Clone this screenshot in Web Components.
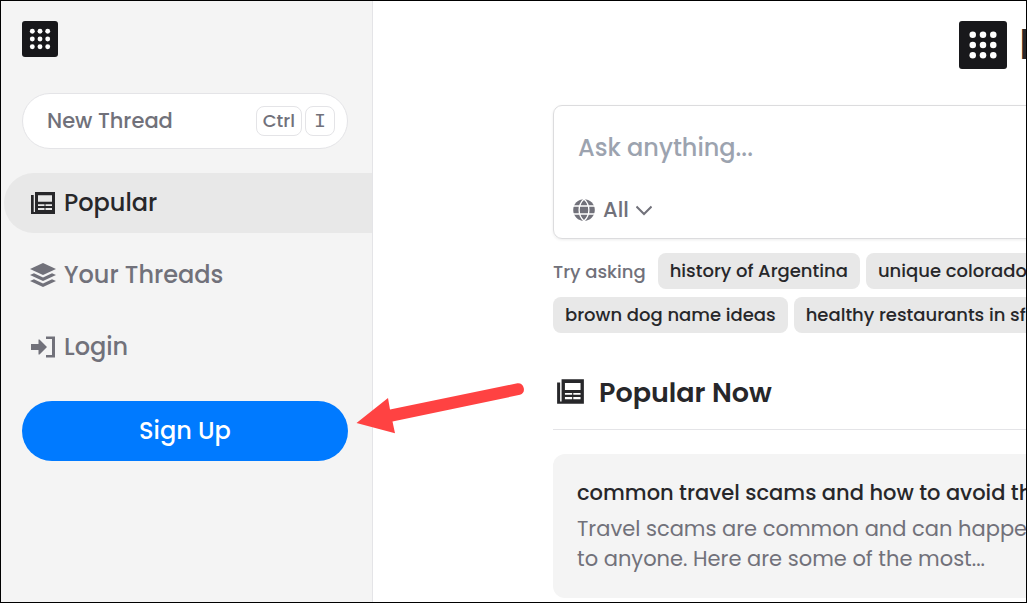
<!DOCTYPE html>
<html lang="en">
<head>
<meta charset="utf-8">
<meta name="viewport" content="width=device-width, initial-scale=1">
<title>Threads</title>
<style>
  html, body { margin: 0; height: 100%; }
  body { font-family: Poppins, Inter, "Open Sans", sans-serif; color: #27272a; background: #fff; overflow: hidden; }
</style>
</head>
<body>
<app-shell>
  <side-bar slot="side">
    <nav-item icon="news" active>Popular</nav-item>
    <nav-item icon="layers">Your Threads</nav-item>
    <nav-item icon="login">Login</nav-item>
  </side-bar>
  <brand-head></brand-head>
  <ask-box></ask-box>
  <ask-hints></ask-hints>
  <popular-head>Popular Now</popular-head>
  <thread-card>
    <span slot="title">common travel scams and how to avoid them</span>
    Travel scams are common and can happen to anyone. Here are some of the most...
  </thread-card>
  <callout-arrow slot="overlay"></callout-arrow>
</app-shell>

<script>
const ICONS = {
  dots: {
    box: '0 0 24 24',
    body: [4.3, 12, 19.7].map(y => [4.3, 12, 19.7].map(x => `<circle cx="${x}" cy="${y}" r="2.45"/>`).join('')).join(''),
  },
  news: {
    box: '0 0 26 24',
    body: '<path fill-rule="evenodd" d="M1 4h2.700v17H5V1h20v22H1zM8 4.300v6.400h14V4.300zM8 13.300v1.700h6.500v-1.700zM15.500 13.300v1.700H22v-1.700zM8 17v2h6.500v-2zM15.500 17v2H22v-2z"/>',
  },
  layers: {
    box: '0 0 26 24',
    body: '<path d="M13 0l13 6-13 6L0 6z"/><path d="M0 12l4-1.800 9 4.200 9-4.200 4 1.800-13 6z"/><path d="M0 18l4-1.800 9 4.200 9-4.200 4 1.800-13 6z"/>',
  },
  login: {
    box: '0 0 26 24',
    body: '<path d="M1 9h7.500V4.500h1L17 12l-7.500 7.500h-1V15H1zM16 1.500h9v21h-9v-2.500h6V4h-6z"/>',
  },
  globe: {
    box: '0 0 22 22',
    body: '<circle cx="11" cy="11" r="10.8"/><path d="M0 7h22M0 15h22M11 0C4.500 6 4.500 16 11 22M11 0c6.500 6 6.500 16 0 22" fill="none" stroke="#fff" stroke-width="1.300"/>',
  },
  chevron: {
    box: '0 0 16 16',
    body: '<path d="M.5 4.500L8 12l7.500-7.500" fill="none" stroke="currentColor" stroke-width="2"/>',
  },
}

const icon = (name) => `<svg class="icon ${name}" viewBox="${ICONS[name].box}" fill="currentColor" aria-hidden="true">${ICONS[name].body}</svg>`

// Small base: every element only supplies its css and markup
class BaseElement extends HTMLElement {
  connectedCallback() {
    if (this.shadowRoot) return
    this.attachShadow({ mode: 'open' })
    this.shadowRoot.innerHTML = `
      <style>
        :host { display: block; }
        *, *::before { box-sizing: border-box; }
        .icon { display: block; flex: none; }
        ${this.css()}
      </style>
      ${this.html()}`
  }
}

class AppShell extends BaseElement {
  css() {
    return `
      :host { display: flex; box-sizing: border-box; height: 100%; border: 1px solid #000; overflow: hidden; }
      aside { flex: 0 0 372px; background: #f4f4f4; border-right: 1px solid #e4e4e7; }
      main { flex: 1; min-width: 0; overflow: hidden; padding: 20px 0 0 180px; }
      .column { min-width: 898px; }
    `
  }
  html() {
    return `
      <aside><slot name="side"></slot></aside>
      <main><div class="column"><slot></slot></div></main>
      <slot name="overlay"></slot>`
  }
}

class SideBar extends BaseElement {
  css() {
    return `
      :host { padding: 20px 0; }
      .logo { display: flex; width: 36px; height: 36px; margin-left: 21px; border-radius: 3px; background: #18181b; color: #fff; align-items: center; justify-content: center; }
      .dots { width: 24px; height: 24px; }
      .new, .signup { display: flex; align-items: center; width: calc(100% - 45px); margin: 0 24px 0 21px; border-radius: 30px; font: inherit; font-weight: 500; cursor: pointer; }
      .new { height: 56px; margin-top: 36px; padding: 0 12px 0 24px; gap: 3px; border: 1px solid #e4e4e7; background: #fff; color: #71717a; font-size: 21px; line-height: 30px; }
      .label { flex: 1; text-align: left; }
      kbd { height: 30px; padding: 0 6px; border: 1px solid #e4e4e7; border-radius: 8px; font: 500 18px/27px Poppins, Inter, sans-serif; }
      kbd.key { padding: 0 8px; font: 400 20px/30px "Liberation Mono", monospace; }
      nav { display: flex; flex-direction: column; gap: 12px; margin: 24px 0 24px 3px; }
      .signup { justify-content: center; height: 60px; padding: 0; border: 0; background: #007aff; color: #fff; font-size: 24px; line-height: 36px; }
    `
  }
  html() {
    return `
      <a class="logo" href="#" aria-label="Home">${icon('dots')}</a>
      <button class="new"><span class="label">New Thread</span><kbd>Ctrl</kbd><kbd class="key">I</kbd></button>
      <nav><slot></slot></nav>
      <button class="signup">Sign Up</button>`
  }
}

class NavItem extends BaseElement {
  css() {
    return `
      a { display: flex; align-items: center; gap: 8px; height: 60px; padding-left: 26px; border-radius: 30px 0 0 30px; color: #71717a; font-size: 24px; font-weight: 500; line-height: 36px; text-decoration: none; }
      :host([active]) a { background: #e8e8e8; color: #27272a; }
      .icon { width: 26px; height: 24px; }
    `
  }
  html() {
    return `<a href="#">${icon(this.getAttribute('icon'))}<slot></slot></a>`
  }
}

class BrandHead extends BaseElement {
  css() {
    return `
      :host { display: flex; justify-content: center; align-items: center; gap: 12px; height: 48px; margin-bottom: 36px; }
      .mark { display: flex; width: 48px; height: 48px; border-radius: 3px; background: #18181b; color: #fff; align-items: center; justify-content: center; }
      .dots { width: 32px; height: 32px; }
      .word { font-size: 42px; font-weight: 600; line-height: 48px; }
    `
  }
  html() {
    return `<span class="mark">${icon('dots')}</span><span class="word">P</span>`
  }
}

class AskBox extends BaseElement {
  css() {
    return `
      form { height: 134px; padding: 23px 19px; border: 1px solid #dcdcde; border-radius: 9px; box-shadow: 0 1px 3px rgba(0,0,0,0.08); }
      input { display: block; width: 100%; height: 36px; margin: 0 0 30px; padding: 0 5px; border: 0; outline: 0; background: none; color: #27272a; font: inherit; font-size: 24px; font-weight: 500; }
      input::placeholder { color: #9ca3af; opacity: 1; }
      .scope { display: flex; align-items: center; color: #71717a; font-size: 21px; }
      .globe { width: 22px; height: 22px; margin-right: 8px; }
      select { appearance: none; padding: 0; border: 0; background: none; color: inherit; font: inherit; font-weight: 500; }
      .chevron { width: 16px; height: 16px; margin-left: 7px; }
    `
  }
  html() {
    return `
      <form>
        <input type="text" placeholder="Ask anything..." aria-label="Ask anything">
        <label class="scope">${icon('globe')}<select aria-label="Scope"><option>All</option></select>${icon('chevron')}</label>
      </form>`
  }
}

class AskHints extends BaseElement {
  css() {
    return `
      :host { display: flex; flex-direction: column; gap: 8px; margin-top: 14px; font-size: 18px; font-weight: 500; }
      .row { display: flex; align-items: center; gap: 6px; white-space: nowrap; }
      .lead { margin-right: 6px; color: #71717a; }
      button { height: 36px; padding: 0 12px 2px; border: 0; border-radius: 8px; background: #e8e8e8; color: #27272a; font: inherit; cursor: pointer; }
    `
  }
  html() {
    return `
      <div class="row"><span class="lead">Try asking</span><button>history of Argentina</button><button>unique colorado</button></div>
      <div class="row"><button>brown dog name ideas</button><button>healthy restaurants in sf</button></div>`
  }
}

class PopularHead extends BaseElement {
  css() {
    return `
      h2 { display: flex; align-items: center; gap: 14px; height: 73px; margin: 24px 0; padding: 0 0 0 3px; border-bottom: 1px solid #e4e4e7; font-size: 27px; font-weight: 600; line-height: 40px; }
      .icon { width: 29px; height: 27px; margin-bottom: 4px; }
    `
  }
  html() {
    return `<h2>${icon('news')}<slot></slot></h2>`
  }
}

class ThreadCard extends BaseElement {
  css() {
    return `
      article { max-width: 528px; padding: 24px; border-radius: 12px; background: #f4f4f4; box-sizing: border-box; }
      h3 { margin: 0 0 6px; font-size: 21px; font-weight: 500; line-height: 30px; white-space: nowrap; }
      p { margin: 0; color: #71717a; font-size: 21px; line-height: 30px; }
    `
  }
  html() {
    return `<article><h3><slot name="title"></slot></h3><p><slot></slot></p></article>`
  }
}

class CalloutArrow extends BaseElement {
  css() {
    return `
      :host { position: absolute; left: 356px; top: 382px; pointer-events: none; }
      svg { display: block; width: 170px; height: 52px; }
    `
  }
  html() {
    return `
      <svg viewBox="356 382 170 52" fill="#ff4242" aria-hidden="true">
        <path d="M356.500 423L388 398l2 11.500L517.500 383.200A6 6 0 0 1 520 394.800L392.500 421.500 395 433.300z"/>
      </svg>`
  }
}

customElements.define('app-shell', AppShell)
customElements.define('side-bar', SideBar)
customElements.define('nav-item', NavItem)
customElements.define('brand-head', BrandHead)
customElements.define('ask-box', AskBox)
customElements.define('ask-hints', AskHints)
customElements.define('popular-head', PopularHead)
customElements.define('thread-card', ThreadCard)
customElements.define('callout-arrow', CalloutArrow)
</script>
</body>
</html>
